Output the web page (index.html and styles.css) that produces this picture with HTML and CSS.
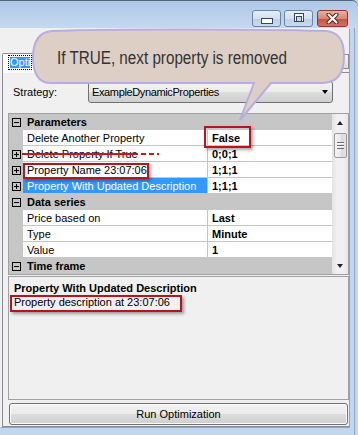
FILE: index.html
```html
<!DOCTYPE html>
<html lang="en">
<head>
    <meta charset="UTF-8">
    <title>Optimization</title>
    <link rel="stylesheet" href="styles.css">
</head>
<body>
    <div class="window">
        <div class="titlebar">
            <span class="tbtn min"></span>
            <span class="tbtn max"><span class="max-glyph"></span></span>
            <span class="tbtn close">
                <svg width="13" height="11" viewBox="0 0 13 11">
                    <path d="M2.5 1.5 L10.5 9.5 M10.5 1.5 L2.5 9.5" stroke="#5b2620" stroke-width="4" stroke-linecap="round"/>
                    <path d="M2.5 1.5 L10.5 9.5 M10.5 1.5 L2.5 9.5" stroke="#fff" stroke-width="2" stroke-linecap="round"/>
                </svg>
            </span>
        </div>

        <div class="client">
            <div class="tabs">
                <div class="tab"><span class="tab-focus"><span class="tab-label">Opti</span></span></div>
                <div class="tab-scroll">
                    <svg width="6" height="8" viewBox="0 0 6 8"><path d="M1 0 L5 4 L1 8 Z" fill="#222"/></svg>
                </div>
            </div>

            <div class="tabpage">
                <div class="strategy">
                    <label>Strategy:</label>
                    <div class="combo"><span>ExampleDynamicProperties</span><span class="combo-arrow"></span></div>
                </div>

                <div class="grid">
                    <div class="rows">
                        <div class="row cat"><span class="gutter"><span class="pm minus"></span></span><span class="cat-name">Parameters</span></div>
                        <div class="row"><span class="gutter"></span><span class="name">Delete Another Property</span><span class="value"><span class="marked marked-false">False</span></span></div>
                        <div class="row"><span class="gutter"><span class="pm plus"></span></span><span class="name"><span class="struck">Delete Property If True</span></span><span class="value">0;0;1</span></div>
                        <div class="row"><span class="gutter"><span class="pm plus"></span></span><span class="name"><span class="marked marked-name">Property Name 23:07:06</span></span><span class="value">1;1;1</span></div>
                        <div class="row sel"><span class="gutter"><span class="pm plus"></span></span><span class="name">Property With Updated Description</span><span class="value">1;1;1</span></div>
                        <div class="row cat"><span class="gutter"><span class="pm minus"></span></span><span class="cat-name">Data series</span></div>
                        <div class="row"><span class="gutter"></span><span class="name">Price based on</span><span class="value">Last</span></div>
                        <div class="row"><span class="gutter"></span><span class="name">Type</span><span class="value">Minute</span></div>
                        <div class="row"><span class="gutter"></span><span class="name">Value</span><span class="value">1</span></div>
                        <div class="row cat"><span class="gutter"><span class="pm minus"></span></span><span class="cat-name">Time frame</span></div>
                    </div>
                    <div class="vscroll">
                        <span class="sb-btn up"></span>
                        <span class="thumb"><span class="grip"></span></span>
                        <span class="sb-track"></span>
                        <span class="sb-btn down"></span>
                    </div>
                </div>

                <div class="desc">
                    <div class="desc-title">Property With Updated Description</div>
                    <div class="desc-text"><span class="marked marked-desc">Property description at 23:07:06</span></div>
                </div>

                <button class="run">Run Optimization</button>
            </div>
        </div>

        <svg class="callout" width="358" height="125" viewBox="0 0 358 125">
            <path d="M52 31 C110 29 250 29 326 31 C340 32 344 42 344 56 C344 72 338 83 322 83 L271 83 L240 120 L254 83 L50 83 C38 83 33 72 33 58 C33 42 38 32 52 31 Z"
                  fill="#ddcfc6" stroke="#b6aee3" stroke-width="2"/>
            <text class="callout-text" x="57" y="64" textLength="230" lengthAdjust="spacingAndGlyphs">If TRUE, next property is removed</text>
        </svg>
    </div>
</body>
</html>
```

FILE: styles.css
```css
* { box-sizing: border-box; }
body { margin: 0; width: 358px; height: 435px; overflow: hidden; background: linear-gradient(to right, transparent 354px, #8aa4c4 354px 355px, transparent 355px), #c2d6ee; font-family: "Liberation Sans", Arial, sans-serif; font-size: 11px; color: #000; }
.window { position: relative; width: 358px; height: 435px; }

/* title bar */
.titlebar { height: 28px; border-top: 1px solid #52657a; border-top-right-radius: 6px; background: linear-gradient(#aec8e6, #c5d9ef); display: flex; justify-content: flex-end; align-items: flex-start; padding: 9px 10px 0 0; }
.tbtn { width: 29px; height: 17px; margin-left: 3px; border: 1px solid #6b84a3; border-radius: 3px; background: linear-gradient(#e6eef8, #d2e0f0 50%, #bccfe7 51%, #cadbef); display: flex; justify-content: center; align-items: flex-start; }
.tbtn.min { padding-top: 7px; }
.tbtn.min::after { content: ""; width: 10px; height: 4px; background: #fff; border: 1px solid #39475a; }
.tbtn.max { padding-top: 2px; }
.max-glyph { width: 10px; height: 9px; border: 1px solid #39475a; background: #fff; padding: 2px 1px 1px; }
.max-glyph::after { content: ""; display: block; height: 100%; border: 1px solid #39475a; background: #c9d9ec; }
.tbtn.close { width: 31px; margin-left: 4px; padding-top: 2px; border-color: #8a3a31; background: linear-gradient(#eab0a2, #d98573 50%, #c6503f 51%, #d3735f); }

/* client area */
.client { width: 349px; height: 399px; background: #f0f0f0; box-shadow: 1px 1px 0 #8aa4c4; }
.tabs { height: 44px; display: flex; align-items: flex-end; }
.tab { position: relative; z-index: 1; margin-left: 2px; margin-bottom: -1px; height: 20px; padding: 1px 6px 0 5px; border: 1px solid #898c95; border-bottom: none; border-radius: 2px 2px 0 0; background: #fbfbfb; }
.tab-focus { display: inline-block; border: 1px dotted #000; padding: 1px; }
.tab-label { display: block; line-height: 11px; background: #3399ff; color: #fff; }
.tab-scroll { margin-left: auto; margin-bottom: 3px; width: 16px; height: 15px; border: 1px solid #8c8c8c; background: linear-gradient(#f6f6f6, #dcdcdc); display: flex; align-items: center; justify-content: flex-end; padding-right: 3px; }

.tabpage { margin-left: 2px; height: 355px; border: 1px solid #898c95; border-right: none; padding: 8px 0 1px 5px; }

.strategy { display: flex; align-items: center; height: 22px; }
.strategy label { width: 80px; padding-left: 5px; }
.combo { width: 245px; height: 22px; border: 1px solid #707070; border-radius: 3px; background: linear-gradient(#f2f2f2, #ebebeb 50%, #dddddd 50%, #cfcfcf); display: flex; align-items: center; padding-left: 3px; letter-spacing: -0.37px; }
.combo-arrow { margin-left: auto; margin-right: 4px; border-left: 3.5px solid transparent; border-right: 3.5px solid transparent; border-top: 4px solid #000; }

/* property grid */
.grid { margin-top: 10px; width: 341px; height: 162px; border: 1px solid #a0a0a0; display: flex; background: #fff; }
.rows { width: 323px; }
.row { display: flex; height: 16px; }
.gutter { width: 14px; background: #c6c6c6; display: flex; align-items: center; padding-left: 3px; }
.name { width: 185px; padding: 2px 0 0 4px; line-height: 13px; white-space: nowrap; border-right: 1px solid #c6c6c6; border-bottom: 1px solid #c6c6c6; }
.value { flex: 1; padding: 2px 0 0 4px; line-height: 13px; font-weight: bold; border-bottom: 1px solid #c6c6c6; }
.row.cat { background: #c6c6c6; }
.cat-name { padding: 2px 0 0 4px; line-height: 13px; font-weight: bold; }
.row.sel .name { background: #3399ff; color: #fff; }

.pm { width: 9px; height: 9px; border: 1px solid #000; background: linear-gradient(#000, #000) center / 5px 1px no-repeat; }
.pm.plus { background: linear-gradient(#000, #000) center / 5px 1px no-repeat, linear-gradient(#000, #000) center / 1px 5px no-repeat; }

.vscroll { width: 16px; display: flex; flex-direction: column; background: linear-gradient(to right, #e3e3e3, #f0f0f0 30%, #f0f0f0 70%, #e6e6e6); }
.sb-btn { height: 17px; display: flex; align-items: center; justify-content: center; }
.sb-btn.up::after { content: ""; border-left: 3.5px solid transparent; border-right: 3.5px solid transparent; border-bottom: 4px solid #222; }
.sb-btn.down::after { content: ""; border-left: 3.5px solid transparent; border-right: 3.5px solid transparent; border-top: 4px solid #222; }
.thumb { margin: 2px 1px 0 2px; height: 25px; border: 1px solid #9a9a9a; border-radius: 2px; background: linear-gradient(to right, #f5f5f5, #e8e8e8 50%, #d9d9d9 51%, #e2e2e2); display: flex; align-items: center; justify-content: center; }
.grip { width: 7px; height: 7px; background: repeating-linear-gradient(#6f6f6f 0 1px, #fafafa 1px 2px, transparent 2px 3px); }
.sb-track { flex: 1; }

/* annotations drawn over the form */
.marked { position: relative; display: inline-block; }
.marked::after { content: ""; position: absolute; border: 2px solid #b8141c; box-shadow: 2px 2px 3px rgba(0,0,0,0.35); }
.marked-false::after { top: -6px; bottom: -3px; left: -8px; right: -11px; }
.marked-name::after { top: -1px; bottom: -2px; left: -4px; right: -2px; }
.marked-desc::after { top: 0; bottom: -3px; left: -4px; right: -12px; }
.struck { position: relative; display: inline-block; }
.struck::before { content: ""; position: absolute; left: -5px; right: 0; top: 5px; height: 2px; background: #d0141c; }
.struck::after { content: ""; position: absolute; left: calc(100% + 3px); width: 18px; top: 5px; height: 2px; background: repeating-linear-gradient(90deg, #d0141c 0 5px, transparent 5px 8px); }

/* description */
.desc { margin-top: 1px; width: 341px; height: 124px; border: 1px solid #a0a0a0; padding: 4px 5px; }
.desc-title { font-weight: bold; line-height: 14px; }
.desc-text { line-height: 14px; }

.run { display: block; margin: 3px 0 0 1px; width: 339px; height: 22px; padding: 0; border: 1px solid #707070; border-radius: 3px; background: linear-gradient(#f2f2f2, #ebebeb 50%, #dddddd 50%, #cfcfcf); box-shadow: inset 0 0 0 1px #fcfcfc; font: inherit; color: #000; }

/* callout bubble */
.callout { position: absolute; left: 0; top: 0; z-index: 5; }
.callout-text { font-family: "Liberation Sans", Arial, sans-serif; font-size: 18px; fill: #333; }
```
